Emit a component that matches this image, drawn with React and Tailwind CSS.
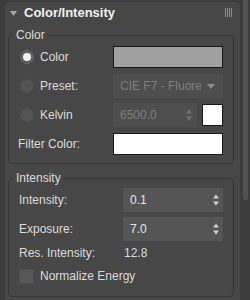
import React from "react";

function Spin({ color = "#d0d0d0" }) {
  return (
    <svg width="6" height="12" viewBox="0 0 6 12" className="shrink-0">
      <polygon points="0,4.5 6,4.5 3,0.5" fill={color} />
      <polygon points="0,7.5 6,7.5 3,11.5" fill={color} />
    </svg>
  );
}

function Radio({ checked }) {
  return (
    <div
      className={
        checked
          ? "w-[14px] h-[14px] rounded-full bg-[#5e5e5e] border border-[#666666] flex items-center justify-center shrink-0"
          : "w-[14px] h-[14px] rounded-full bg-[#545454] border border-[#4f4f4f] flex items-center justify-center shrink-0"
      }
    >
      {checked && <div className="w-[8px] h-[8px] rounded-full bg-[#f4f4f4]" />}
    </div>
  );
}

export default function App() {
  return (
    <div
      className="w-[250px] h-[300px] bg-[#3c3c3c] flex overflow-hidden text-[12px] text-[#dcdcdc]"
      style={{ fontFamily: '"Liberation Sans", Arial, sans-serif' }}
    >
      <div className="w-[5px] shrink-0" />
      <div className="w-[235px] mt-[2px] bg-[#474747] rounded-t-[4px] flex flex-col shrink-0">
        <div className="h-[22px] flex items-center pl-[5px] pr-[8px]">
          <svg width="7" height="5" viewBox="0 0 7 5" className="shrink-0">
            <polygon points="0,0 7,0 3.5,5" fill="#a8a8a8" />
          </svg>
          <span className="ml-[7px] text-[13px] font-bold text-[#f0f0f0] leading-[16px]">Color/Intensity</span>
          <div className="ml-auto flex gap-[1px] h-[9px] self-start mt-[6px]">
            <div className="w-[1px] bg-[#8a8a8a]" />
            <div className="w-[1px] bg-[#8a8a8a]" />
            <div className="w-[1px] bg-[#8a8a8a]" />
            <div className="w-[1px] bg-[#8a8a8a]" />
          </div>
        </div>

        <fieldset className="mt-[4px] ml-[3px] mr-[6px] border border-[#363636] rounded-[4px] px-0 pt-[3px] pb-[7px] flex flex-col gap-[5px]">
          <legend className="ml-[4px] px-[3px] leading-[14px] text-[#dcdcdc]">Color</legend>
          <div className="h-[24px] flex items-center pl-[11px] pr-[10px]">
            <Radio checked />
            <span className="ml-[6px] flex-1">Color</span>
            <div className="w-[110px] h-[22px] bg-[#a0a0a0] border border-[#161616]" />
          </div>
          <div className="h-[24px] flex items-center pl-[11px] pr-[10px]">
            <Radio />
            <span className="ml-[6px] flex-1">Preset:</span>
            <div className="w-[110px] h-[24px] bg-[#4e4e4e] flex items-center pl-[7px] pr-[8px] text-[#7e7e7e] overflow-hidden">
              <span className="flex-1 whitespace-nowrap overflow-hidden">CIE F7 - Fluorescent</span>
              <svg width="8" height="5" viewBox="0 0 8 5" className="ml-[6px] shrink-0">
                <polygon points="0,0 8,0 4,5" fill="#8a8a8a" />
              </svg>
            </div>
          </div>
          <div className="h-[24px] flex items-center pl-[11px] pr-[10px]">
            <Radio />
            <span className="ml-[6px] flex-1">Kelvin</span>
            <div className="w-[84px] h-[24px] bg-[#4e4e4e] flex items-center pl-[7px] pr-[5px] text-[#7e7e7e]">
              <span className="flex-1">6500.0</span>
              <Spin color="#747474" />
            </div>
            <div className="ml-[5px] w-[21px] h-[22px] bg-white border border-[#161616]" />
          </div>
          <div className="h-[24px] flex items-center pl-[9px] pr-[10px]">
            <span className="flex-1">Filter Color:</span>
            <div className="w-[110px] h-[22px] bg-white border border-[#161616]" />
          </div>
        </fieldset>

        <fieldset className="mt-[7px] ml-[3px] mr-[6px] border border-[#363636] rounded-[4px] px-0 pt-[3px] pb-[10px] flex flex-col">
          <legend className="ml-[4px] px-[3px] leading-[14px] text-[#dcdcdc]">Intensity</legend>
          <div className="h-[24px] flex items-center pl-[10px] pr-[10px]">
            <span className="flex-1">Intensity:</span>
            <div className="w-[100px] h-[24px] bg-[#555555] flex items-center pl-[7px] pr-[4px] text-[#e6e6e6]">
              <span className="flex-1">0.1</span>
              <Spin />
            </div>
          </div>
          <div className="mt-[5px] h-[24px] flex items-center pl-[10px] pr-[10px]">
            <span className="flex-1">Exposure:</span>
            <div className="w-[100px] h-[24px] bg-[#555555] flex items-center pl-[7px] pr-[4px] text-[#e6e6e6]">
              <span className="flex-1">7.0</span>
              <Spin />
            </div>
          </div>
          <div className="mt-[2px] h-[20px] flex items-center pl-[10px] pr-[10px]">
            <span className="w-[105px]">Res. Intensity:</span>
            <span>12.8</span>
          </div>
          <div className="mt-[3px] h-[20px] flex items-center pl-[10px] pr-[10px]">
            <div className="w-[15px] h-[15px] bg-[#575757] border border-[#4e4e4e] shrink-0" />
            <span className="ml-[6px]">Normalize Energy</span>
          </div>
        </fieldset>
      </div>
      <div className="w-[3px] shrink-0" />
      <div className="w-[5px] h-[200px] bg-[#525252] rounded-b-[2px] shrink-0" />
    </div>
  );
}
